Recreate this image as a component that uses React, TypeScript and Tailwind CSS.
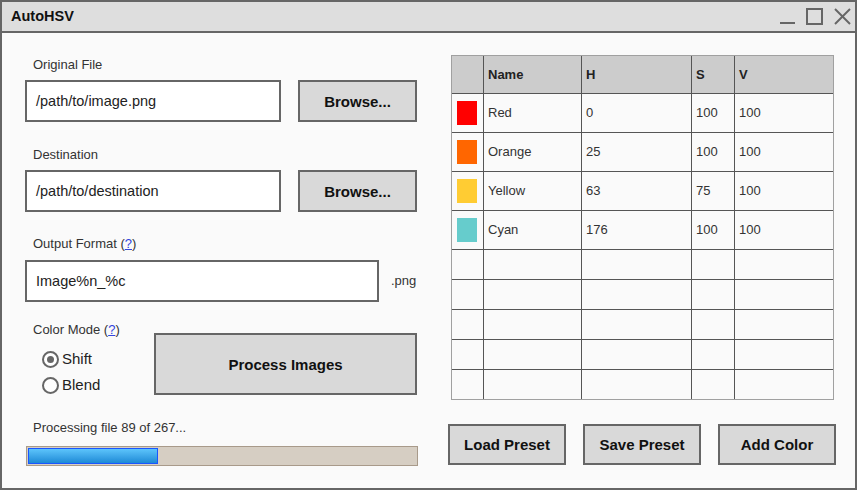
import React from "react";

const font = { fontFamily: '"Liberation Sans", Arial, sans-serif' };

function Btn({ children, className }: { children: React.ReactNode; className: string }) {
  return (
    <div
      className={
        "flex items-center justify-center border-2 border-[#666666] bg-[#d9d9d9] font-bold text-[15px] text-[#111]" +
        " " +
        className
      }
    >
      {children}
    </div>
  );
}

function Radio({ checked, label }: { checked: boolean; label: string }) {
  return (
    <div className="flex h-5 items-center">
      <div className="flex h-[17px] w-[17px] items-center justify-center rounded-full border-2 border-[#666666] bg-white">
        {checked && <div className="h-[7px] w-[7px] rounded-full bg-[#666666]" />}
      </div>
      <span className="ml-[3px] text-[15px] text-[#222]">{label}</span>
    </div>
  );
}

const rows = [
  { c: "#ff0000", n: "Red", h: "0", s: "100", v: "100" },
  { c: "#ff6600", n: "Orange", h: "25", s: "100", v: "100" },
  { c: "#ffcc33", n: "Yellow", h: "63", s: "75", v: "100" },
  { c: "#66cccc", n: "Cyan", h: "176", s: "100", v: "100" },
];

export default function App() {
  return (
    <div style={font} className="h-[490px] w-[857px] overflow-hidden">
      <div className="flex h-[490px] w-[857px] flex-col border-2 border-[#666666] bg-[#fafafa]">
        {/* Title bar */}
        <div className="flex h-[31px] shrink-0 items-center border-b-2 border-[#666666] bg-[#dedede] pl-[9px]">
          <span className="text-[14.5px] font-bold text-[#111]">AutoHSV</span>
          <div className="ml-auto flex items-center">
            <svg width="18" height="18" viewBox="0 0 18 18" className="mt-[1px]">
              <line x1="1" y1="15" x2="16" y2="15" stroke="#666" strokeWidth="2" />
            </svg>
            <svg width="18" height="18" viewBox="0 0 18 18" className="ml-[9px] mt-[1px]">
              <rect x="1" y="1" width="15" height="15" fill="none" stroke="#666" strokeWidth="2" />
            </svg>
            <svg width="18" height="18" viewBox="0 0 18 18" className="ml-[10px] mr-[3px] mt-[1px]">
              <line x1="1" y1="1" x2="16" y2="16" stroke="#666" strokeWidth="2" />
              <line x1="16" y1="1" x2="1" y2="16" stroke="#666" strokeWidth="2" />
            </svg>
          </div>
        </div>

        {/* Body */}
        <div className="flex flex-1">
          {/* Left column */}
          <div className="flex w-[415px] flex-col pl-[23px]">
            <div className="mt-[24px] h-4 pl-2 text-[13px] leading-4 text-[#333]">Original File</div>
            <div className="mt-[7px] flex">
              <div className="flex h-[42px] w-[256px] items-center border-2 border-[#666666] bg-white pl-[9px] pt-[2px] text-[14.5px] text-[#222]">
                /path/to/image.png
              </div>
              <Btn className="ml-[17px] h-[42px] w-[119px] pt-[2px]">Browse...</Btn>
            </div>

            <div className="mt-[25px] h-4 pl-2 text-[13px] leading-4 text-[#333]">Destination</div>
            <div className="mt-[7px] flex">
              <div className="flex h-[42px] w-[256px] items-center border-2 border-[#666666] bg-white pl-[9px] pt-[2px] text-[14.5px] text-[#222]">
                /path/to/destination
              </div>
              <Btn className="ml-[17px] h-[42px] w-[119px] pt-[2px]">Browse...</Btn>
            </div>

            <div className="mt-[24px] h-4 pl-2 text-[13px] leading-4 text-[#333]">
              Output Format (<span className="text-[#3344dd] underline">?</span>)
            </div>
            <div className="mt-[8px] flex items-center">
              <div className="flex h-[42px] w-[354px] items-center border-2 border-[#666666] bg-white pl-[9px] pt-[1px] text-[14.5px] text-[#222]">
                Image%n_%c
              </div>
              <span className="ml-[12px] text-[13px] text-[#333]">.png</span>
            </div>

            <div className="mt-[20px] flex">
              <div className="flex w-[129px] flex-col">
                <div className="h-4 pl-2 text-[13px] leading-4 text-[#333]">
                  Color Mode (<span className="text-[#3344dd] underline">?</span>)
                </div>
                <div className="mt-[11px] pl-[17px]">
                  <Radio checked label="Shift" />
                </div>
                <div className="mt-[6px] pl-[17px]">
                  <Radio checked={false} label="Blend" />
                </div>
              </div>
              <Btn className="mt-[11px] h-[62px] w-[263px] pt-[2px]">Process Images</Btn>
            </div>

            <div className="mt-[25px] h-4 pl-2 text-[13px] leading-4 text-[#333]">Processing file 89 of 267...</div>
            <div className="ml-[1px] mt-[10px] flex h-[20px] w-[392px] border border-[#a89a8a] bg-[#d6cec3] p-px">
              <div className="h-full w-[130px] border border-[#1a55ff] bg-gradient-to-b from-[#5cc4fb] to-[#1a8ad6]" />
            </div>
          </div>

          {/* Right column */}
          <div className="flex flex-1 flex-col">
            <div className="ml-[34px] mt-[22px] flex w-[383px] flex-col border border-[#a0a0a0] text-[13px] text-[#333]">
              <div className="flex h-[37px] bg-[#cccccc] font-bold text-[#222]">
                <div className="w-[31px]" />
                <div className="flex w-[98px] items-center border-l border-[#555] pl-[4px]">Name</div>
                <div className="flex w-[110px] items-center border-l border-[#555] pl-[4px]">H</div>
                <div className="flex w-[43px] items-center border-l border-[#555] pl-[4px]">S</div>
                <div className="flex w-[99px] items-center border-l border-[#555] pl-[4px]">V</div>
              </div>
              {rows.map((r) => (
                <div key={r.n} className="flex h-[39px] border-t border-[#555]">
                  <div className="flex w-[31px] items-center pl-[5px]">
                    <div className="h-[24px] w-[20px]" style={{ backgroundColor: r.c }} />
                  </div>
                  <div className="flex w-[98px] items-center border-l border-[#555] pl-[4px]">{r.n}</div>
                  <div className="flex w-[110px] items-center border-l border-[#555] pl-[4px]">{r.h}</div>
                  <div className="flex w-[43px] items-center border-l border-[#555] pl-[4px]">{r.s}</div>
                  <div className="flex w-[99px] items-center border-l border-[#555] pl-[4px]">{r.v}</div>
                </div>
              ))}
              {[0, 1, 2, 3, 4].map((i) => (
                <div key={i} className="flex h-[30px] border-t border-[#555]">
                  <div className="w-[31px]" />
                  <div className="w-[98px] border-l border-[#555]" />
                  <div className="w-[110px] border-l border-[#555]" />
                  <div className="w-[43px] border-l border-[#555]" />
                  <div className="w-[99px] border-l border-[#555]" />
                </div>
              ))}
            </div>
            <div className="ml-[31px] mt-[24px] flex gap-[17px]">
              <Btn className="h-[41px] w-[118px] pt-[1px]">Load Preset</Btn>
              <Btn className="h-[41px] w-[118px] pt-[1px]">Save Preset</Btn>
              <Btn className="h-[41px] w-[118px] pt-[1px]">Add Color</Btn>
            </div>
          </div>
        </div>
      </div>
    </div>
  );
}
